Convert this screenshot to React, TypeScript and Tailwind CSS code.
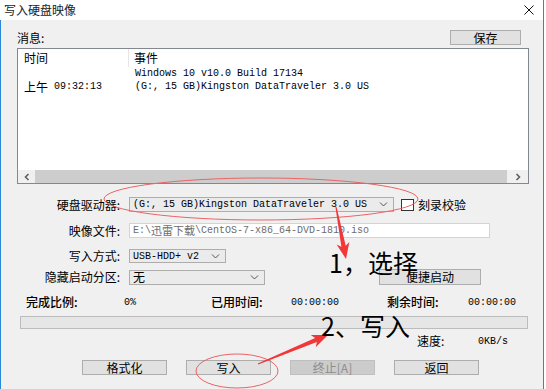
import React from "react";

const mono = "font-['Liberation_Mono',monospace]";

function Chevron({ dir }: { dir: "down" | "left" | "right" }) {
  const d =
    dir === "down" ? "M1 1.5 L4.5 5 L8 1.5" : dir === "left" ? "M4.5 1 L1.5 4 L4.5 7" : "M1.5 1 L4.5 4 L1.5 7";
  const w = dir === "down" ? 9 : 6;
  const h = dir === "down" ? 7 : 8;
  return (
    <svg width={w} height={h} viewBox={`0 0 ${w} ${h}`}>
      <path d={d} fill="none" stroke={dir === "down" ? "#555" : "#606060"} strokeWidth={dir === "down" ? 1 : 1.6} />
    </svg>
  );
}

function Combo({ w, children, mono: isMono = true }: { w: string; children: React.ReactNode; mono?: boolean }) {
  return (
    <div className={`${w} h-full flex items-center justify-between border border-[#adadad] bg-[#ebebeb] pl-[3px] pr-[5px]`}>
      <span className={isMono ? `${mono} text-[10px]` : "text-[12px]"}>{children}</span>
      <Chevron dir="down" />
    </div>
  );
}

function Btn({ w, children, disabled }: { w: string; children: React.ReactNode; disabled?: boolean }) {
  return (
    <div
      className={`${w} h-full flex items-center justify-center border text-[12px] ${
        disabled ? "bg-[#cccccc] border-[#bfbfbf] text-[#8c8c8c]" : "bg-[#e1e1e1] border-[#adadad]"
      }`}
    >
      {children}
    </div>
  );
}

// thin tapering arrow, like the ones from a screenshot tool
function arrowPoints(x1: number, y1: number, x2: number, y2: number) {
  const dx = x2 - x1;
  const dy = y2 - y1;
  const len = Math.hypot(dx, dy);
  const ux = dx / len;
  const uy = dy / len;
  const nx = -uy;
  const ny = ux;
  const neck = len - 13;
  const barb = len - 16;
  const p = (t: number, s: number) => `${x1 + ux * t + nx * s},${y1 + uy * t + ny * s}`;
  return [p(0, 0.6), p(neck, 2.2), p(barb, 6.5), p(len, 0), p(barb, -6.5), p(neck, -2.2), p(0, -0.6)].join(" ");
}

function Annotations() {
  return (
    <>
      <svg className="absolute left-0 top-0 pointer-events-none" width={546} height={389}>
        <ellipse cx={261} cy={199} rx={157} ry={21} fill="none" stroke="#ea6464" strokeWidth={1} />
        <ellipse cx={237} cy={371} rx={41} ry={17} fill="none" stroke="#ea6464" strokeWidth={1} />
        <polygon points={arrowPoints(336, 207, 346, 259)} fill="#f03838" />
        <polygon points={arrowPoints(258, 364, 328, 335)} fill="#f03838" />
      </svg>
      <div className="absolute left-[329px] top-[250px] text-[25px] leading-[25px] text-black pointer-events-none whitespace-nowrap">
        1，选择
      </div>
      <div className="absolute left-[321px] top-[313px] text-[25px] leading-[25px] text-black pointer-events-none whitespace-nowrap">
        2、写入
      </div>
    </>
  );
}

export default function App() {
  return (
    <div className="relative w-[546px] h-[389px] overflow-hidden bg-white text-[12px] text-black font-['Noto_Sans_CJK_SC',sans-serif]">
      <div className="w-[544px] h-full flex flex-col border-r border-[#2b87d8]">
        {/* title bar */}
        <div className="h-[20px] flex items-center justify-between pl-[4px] pr-[9px] bg-white">
          <span className="text-[12px] text-[#222]">写入硬盘映像</span>
          <svg width={10} height={10} viewBox="0 0 10 10">
            <path d="M0.5 0.5 L9.5 9.5 M9.5 0.5 L0.5 9.5" stroke="#111" strokeWidth={1} />
          </svg>
        </div>

        <div className="flex-1 bg-[#f0f0f0] border-l border-[#2b87d8] pl-[16px] pr-[14px] pt-[10px]">
          <div className="h-[15px] flex items-center justify-between">
            <span>消息:</span>
            <div className="h-full mr-[8px]">
              <Btn w="w-[71px]">保存</Btn>
            </div>
          </div>

          {/* log list */}
          <div className="mt-[3px] h-[136px] border border-[#828790] bg-white flex flex-col">
            <div className="h-[18px] flex items-center">
              <div className="w-[111px] h-full flex items-center pl-[6px] border-r border-[#e5e5e5]">时间</div>
              <div className="pl-[5px]">事件</div>
            </div>
            <div className="h-[13px] flex items-center">
              <div className="w-[112px]" />
              <div className={`${mono} text-[10px] pl-[5px]`}>Windows 10 v10.0 Build 17134</div>
            </div>
            <div className="h-[13px] flex items-center">
              <div className="w-[112px] pl-[6px] flex items-center gap-[6px]">
                <span>上午</span>
                <span className={`${mono} text-[10px]`}>09:32:13</span>
              </div>
              <div className={`${mono} text-[10px] pl-[5px]`}>(G:, 15 GB)Kingston DataTraveler 3.0 US</div>
            </div>
            <div className="flex-1" />
            <div className="h-[13px] flex bg-[#f0f0f0]">
              <div className="w-[17px] flex items-center justify-center">
                <Chevron dir="left" />
              </div>
              <div className="flex-1 bg-[#cdcdcd]" />
              <div className="w-[21px] flex items-center justify-center">
                <Chevron dir="right" />
              </div>
            </div>
          </div>

          {/* form */}
          <div className="mt-[13px] h-[15px] flex items-center">
            <div className="w-[103px] text-right">硬盘驱动器:</div>
            <div className="ml-[9px] h-full">
              <Combo w="w-[265px]">(G:, 15 GB)Kingston DataTraveler 3.0 US</Combo>
            </div>
            <div className="ml-[7px] w-[13px] h-[12px] border border-[#333] bg-white" />
            <span className="ml-[4px]">刻录校验</span>
          </div>

          <div className="mt-[11px] h-[15px] flex items-center">
            <div className="w-[103px] text-right">映像文件:</div>
            <div className={`ml-[9px] w-[361px] h-full flex items-center border border-[#d4d4d4] bg-white pl-[3px] ${mono} text-[10px] text-[#6d6d6d]`}>
              E:\<span className="font-['Noto_Sans_CJK_SC',sans-serif] text-[11px]">迅雷下载</span>\CentOS-7-x86_64-DVD-1810.iso
            </div>
          </div>

          <div className="mt-[11px] h-[14px] flex items-center">
            <div className="w-[103px] text-right">写入方式:</div>
            <div className="ml-[9px] h-full">
              <Combo w="w-[97px]">USB-HDD+ v2</Combo>
            </div>
          </div>

          <div className="mt-[6px] h-[16px] flex items-center">
            <div className="w-[103px] text-right">隐藏启动分区:</div>
            <div className="ml-[9px] h-[15px]">
              <Combo w="w-[136px]" mono={false}>无</Combo>
            </div>
            <div className="ml-[114px] h-full">
              <Btn w="w-[102px]">便捷启动</Btn>
            </div>
          </div>

          {/* progress info */}
          <div className="mt-[10px] h-[14px] flex items-center pl-[9px]">
            <span className="w-[98px] font-medium">完成比例:</span>
            <span className={`w-[87px] ${mono} text-[10px]`}>0%</span>
            <span className="w-[80px] font-medium">已用时间:</span>
            <span className={`w-[96px] ${mono} text-[10px]`}>00:00:00</span>
            <span className="w-[81px] font-medium">剩余时间:</span>
            <span className={`${mono} text-[10px]`}>00:00:00</span>
          </div>

          <div className="mt-[7px] ml-[3px] w-[508px] h-[13px] border border-[#bcbcbc] bg-[#e6e6e6]" />

          <div className="mt-[6px] h-[12px] flex items-center pl-[400px]">
            <span className="w-[61px]">速度:</span>
            <span className={`${mono} text-[10px]`}>0KB/s</span>
          </div>

          <div className="mt-[13px] h-[15px] flex gap-[19px] pl-[65px]">
            <Btn w="w-[85px]">格式化</Btn>
            <Btn w="w-[85px]">写入</Btn>
            <Btn w="w-[85px]" disabled>
              终止[A]
            </Btn>
            <Btn w="w-[85px]">返回</Btn>
          </div>
        </div>
      </div>
      <Annotations />
    </div>
  );
}
